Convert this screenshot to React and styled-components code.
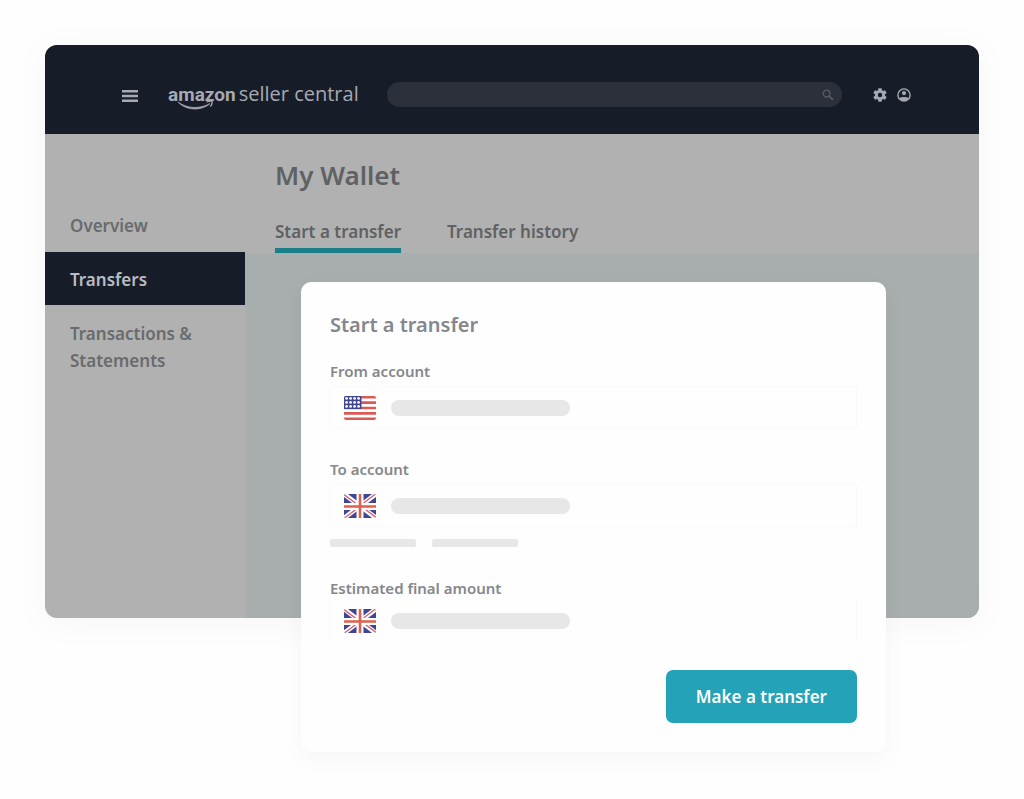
import React from "react";
import styled, { createGlobalStyle } from "styled-components";

const GlobalStyle = createGlobalStyle`
  *, *::before, *::after { box-sizing: border-box; }
  body {
    margin: 0;
    background: #fefefe;
    font-family: "Noto Sans", "Open Sans", sans-serif;
    font-weight: 600;
    color: #5f6163;
  }
  h1, h2 { margin: 0; }
  button, input { font: inherit; color: inherit; border: 0; background: none; padding: 0; }
  a { color: inherit; text-decoration: none; }
`;

const Page = styled.div`
  padding: 45px 45px 180px;
`;

const Window = styled.div`
  position: relative;
  display: flex;
  flex-direction: column;
  min-height: 573px;
  border-radius: 12px;
  background: #b1b1b1;
  box-shadow: 0 4px 36px rgba(0, 0, 0, 0.04);
`;

const Header = styled.header`
  display: flex;
  align-items: center;
  height: 89px;
  padding: 10px 68px 0 77px;
  border-radius: 12px 12px 0 0;
  background: #161d29;
  color: #a6a9b1;
`;

const IconButton = styled.button`
  display: flex;
  cursor: pointer;
`;

const Brand = styled.a`
  display: flex;
  align-items: baseline;
  gap: 3px;
  margin: 0 28px 0 30px;
  line-height: 28px;
  white-space: nowrap;
`;

const BrandName = styled.span`
  position: relative;
  font-family: Roboto, "Open Sans", sans-serif;
  font-size: 19px;
  font-weight: 700;
`;

const Smile = styled.svg`
  position: absolute;
  left: 9px;
  top: 19px;
`;

const BrandProduct = styled.span`
  font-family: "Open Sans", sans-serif;
  font-size: 20px;
  font-weight: 400;
`;

const Search = styled.label`
  display: flex;
  flex: 1;
  align-items: center;
  min-width: 0;
  height: 25px;
  padding: 0 8px 0 16px;
  border-radius: 13px;
  background: #2b303b;
  color: #555b65;
`;

const SearchInput = styled.input`
  flex: 1;
  min-width: 0;
  outline: none;
`;

const HeaderTools = styled.div`
  display: flex;
  gap: 10px;
  margin-left: 31px;
`;

const Body = styled.div`
  display: grid;
  flex: 1;
  grid-template-columns: 200px 1fr;
`;

const Sidebar = styled.nav`
  display: flex;
  flex-direction: column;
  gap: 1px;
  padding-top: 64px;
  font-size: 17px;
  line-height: 27px;
`;

const SideLink = styled.a`
  padding: 14px 25px 12px;
  background: ${(p) => (p.$active ? "#161d29" : "none")};
  color: ${(p) => (p.$active ? "#b9bcc2" : "#696b6d")};
`;

const Main = styled.main`
  display: flex;
  flex-direction: column;
`;

const PageTitle = styled.h1`
  padding: 23px 30px 0;
  font-size: 26px;
  line-height: 36px;
  font-weight: 600;
`;

const Tabs = styled.div`
  display: flex;
  gap: 46px;
  padding: 25px 30px 0;
`;

const Tab = styled.button`
  height: 35px;
  padding-bottom: 3px;
  border-bottom: 5px solid ${(p) => (p.$active ? "#187e88" : "transparent")};
  font-size: 17px;
  line-height: 22px;
  cursor: pointer;
`;

const Canvas = styled.div`
  flex: 1;
  border-bottom-right-radius: 12px;
  background: #a8adae;
`;

const Dialog = styled.form`
  position: absolute;
  top: 237px;
  left: 256px;
  right: 93px;
  display: flex;
  flex-direction: column;
  padding: 28px 29px 29px;
  border-radius: 10px;
  background: #fefefe;
  color: #84878c;
  box-shadow: 0 6px 24px rgba(0, 0, 0, 0.04);
`;

const DialogTitle = styled.h2`
  margin-bottom: 20px;
  font-size: 20px;
  line-height: 30px;
  font-weight: 600;
`;

const FieldLabel = styled.label`
  font-size: 15px;
  line-height: 22px;
`;

const Field = styled.button`
  display: flex;
  align-items: center;
  gap: 15px;
  height: 43px;
  margin: 4px 0 ${(p) => p.$after}px;
  padding: 0 13px;
  border: 1px solid #fafafa;
  border-radius: 2px;
`;

const Amount = styled(Field).attrs({ as: "output" })`
  margin-top: 0;
  border-color: transparent #fafafa;
`;

const Placeholder = styled.span`
  width: ${(p) => (p.$small ? 86 : 179)}px;
  height: ${(p) => (p.$small ? 8 : 16)}px;
  border-radius: ${(p) => (p.$small ? 2 : 8)}px;
  background: #e7e7e7;
`;

const Hint = styled.div`
  display: flex;
  gap: 16px;
  margin-bottom: 30px;
`;

const Submit = styled.button`
  align-self: flex-end;
  height: 53px;
  padding: 0 30px;
  border-radius: 7px;
  background: #24a2b7;
  color: #fbffff;
  font-size: 17px;
  cursor: pointer;
`;

const Flag = styled.svg`
  flex: none;
  width: 32px;
  height: 24px;
  border-radius: 2px;
`;

function UsFlag() {
  const dots = [];
  for (let y = 0; y < 3; y++)
    for (let x = 0; x < 4; x++)
      dots.push(<circle key={`${x}-${y}`} cx={2.6 + x * 4} cy={2.4 + y * 4} r="1.4" />);
  return (
    <Flag viewBox="0 0 32 24" aria-hidden="true">
      <rect width="32" height="24" fill="#fff" />
      <path
        d="M0 1.2h32M0 6.6h32M0 12h32M0 17.4h32M0 22.8h32"
        stroke="#dc5a53"
        strokeWidth="2.6"
      />
      <rect width="17.5" height="13" fill="#414690" />
      <g fill="#f4f4fb">{dots}</g>
    </Flag>
  );
}

function UkFlag() {
  return (
    <Flag viewBox="0 0 32 24" aria-hidden="true">
      <rect width="32" height="24" fill="#414690" />
      <path d="M0 0l32 24M32 0L0 24" stroke="#fff" strokeWidth="4.6" />
      <path d="M0 .6l16 12M32 23.4l-16-12M31.5 0l-16 12M.5 24l16-12" stroke="#d0607a" strokeWidth="1.3" />
      <path d="M16 0v24M0 12.5h32" stroke="#fff" strokeWidth="7" />
      <path d="M16 0v24M0 12.5h32" stroke="#e0604f" strokeWidth="2.6" />
    </Flag>
  );
}

function MenuIcon() {
  return (
    <svg width="16" height="14" viewBox="0 0 16 14" fill="none" stroke="currentColor" strokeWidth="2.4">
      <path d="M0 3.2h16M0 8h16M0 12.8h16" />
    </svg>
  );
}

function SearchIcon() {
  return (
    <svg width="12" height="12" viewBox="0 0 12 12" fill="none" stroke="currentColor" aria-hidden="true">
      <circle cx="4.6" cy="4.6" r="3.4" strokeWidth="1.3" />
      <path d="M7.2 7.2l3.8 3.6" strokeWidth="1.8" />
    </svg>
  );
}

function GearIcon() {
  return (
    <svg width="14" height="14" viewBox="2 2 20 20" fill="currentColor">
      <path d="M19.14 12.94c.04-.3.06-.61.06-.94 0-.32-.02-.64-.07-.94l2.03-1.58a.49.49 0 0 0 .12-.61l-1.92-3.32a.488.488 0 0 0-.59-.22l-2.39.96c-.5-.38-1.03-.7-1.62-.94l-.36-2.54a.484.484 0 0 0-.48-.41h-3.84c-.24 0-.43.17-.47.41l-.36 2.54c-.59.24-1.13.57-1.62.94l-2.39-.96c-.22-.08-.47 0-.59.22L2.74 8.87c-.12.21-.08.47.12.61l2.03 1.58c-.05.3-.09.63-.09.94s.02.64.07.94l-2.03 1.58a.49.49 0 0 0-.12.61l1.92 3.32c.12.22.37.29.59.22l2.39-.96c.5.38 1.03.7 1.62.94l.36 2.54c.05.24.24.41.48.41h3.84c.24 0 .44-.17.47-.41l.36-2.54c.59-.24 1.13-.56 1.62-.94l2.39.96c.22.08.47 0 .59-.22l1.92-3.32c.12-.22.07-.47-.12-.61l-2.01-1.58zM12 15.1a3.1 3.1 0 1 1 0-6.2 3.1 3.1 0 0 1 0 6.2z" />
    </svg>
  );
}

function AccountIcon() {
  return (
    <svg width="14" height="14" viewBox="0 0 14 14" fill="currentColor">
      <circle cx="7" cy="7" r="6.1" fill="none" stroke="currentColor" strokeWidth="1.4" />
      <circle cx="7" cy="5.1" r="2.1" />
      <path d="M2.4 10.4C4 8.5 10 8.5 11.6 10.4 9.5 13.7 4.5 13.7 2.4 10.4z" />
    </svg>
  );
}

export default function App() {
  return (
    <Page>
      <GlobalStyle />
      <Window>
        <Header>
          <IconButton type="button" aria-label="Menu">
            <MenuIcon />
          </IconButton>
          <Brand href="#home">
            <BrandName>
              amazon
              <Smile width="38" height="12" viewBox="0 0 38 12" fill="none" stroke="currentColor" aria-hidden="true">
                <path d="M1 2C9 8.5 23 9.5 33 3.5 24 11.5 9 10.5 1 2z" fill="currentColor" strokeWidth=".8" />
                <path d="M29.5 2c3-1 5-1 5.5-.4.5.8-.2 3.4-1.7 5" strokeWidth="1.3" />
              </Smile>
            </BrandName>
            <BrandProduct>seller central</BrandProduct>
          </Brand>
          <Search>
            <SearchInput type="search" aria-label="Search" />
            <SearchIcon />
          </Search>
          <HeaderTools>
            <IconButton type="button" aria-label="Settings">
              <GearIcon />
            </IconButton>
            <IconButton type="button" aria-label="Account">
              <AccountIcon />
            </IconButton>
          </HeaderTools>
        </Header>
        <Body>
          <Sidebar aria-label="Wallet">
            <SideLink href="#overview">Overview</SideLink>
            <SideLink href="#transfers" $active aria-current="page">Transfers</SideLink>
            <SideLink href="#statements">Transactions &amp; Statements</SideLink>
          </Sidebar>
          <Main>
            <PageTitle>My Wallet</PageTitle>
            <Tabs role="tablist">
              <Tab type="button" role="tab" aria-selected="true" $active>Start a transfer</Tab>
              <Tab type="button" role="tab" aria-selected="false">Transfer history</Tab>
            </Tabs>
            <Canvas />
          </Main>
        </Body>
        <Dialog aria-labelledby="dialog-title">
          <DialogTitle id="dialog-title">Start a transfer</DialogTitle>
          <FieldLabel htmlFor="from">From account</FieldLabel>
          <Field type="button" id="from" $after={29}>
            <UsFlag />
            <Placeholder />
          </Field>
          <FieldLabel htmlFor="to">To account</FieldLabel>
          <Field type="button" id="to" $after={12}>
            <UkFlag />
            <Placeholder />
          </Field>
          <Hint>
            <Placeholder $small />
            <Placeholder $small />
          </Hint>
          <FieldLabel htmlFor="amount">Estimated final amount</FieldLabel>
          <Amount id="amount" $after={28}>
            <UkFlag />
            <Placeholder />
          </Amount>
          <Submit type="button">Make a transfer</Submit>
        </Dialog>
      </Window>
    </Page>
  );
}
